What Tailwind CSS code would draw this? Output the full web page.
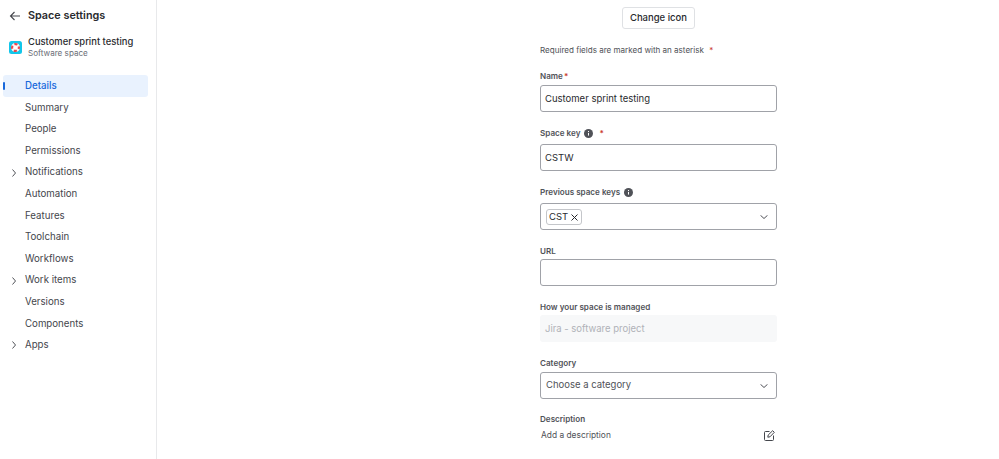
<!DOCTYPE html>
<html>
<head>
<meta charset="utf-8">
<title>Space settings</title>
<script src="https://cdn.jsdelivr.net/npm/@tailwindcss/browser@4"></script>
</head>
<body class="bg-white">
<div class="flex h-[459px] w-[999px] overflow-hidden font-['Inter',sans-serif] text-[#292a2e]">

  <!-- sidebar -->
  <aside class="w-[157px] shrink-0 border-r border-[#e8e9eb] pl-[3px] pr-2">
    <div class="flex h-[31px] items-center pl-[6px]">
      <svg class="h-[12px] w-[12px]" viewBox="0 0 12 12" fill="none" stroke="#44464c" stroke-width="1.1"><path d="M11 6H1.5M5.5 2 1.5 6l4 4"/></svg>
      <span class="ml-[7px] pt-[1px] text-[10.8px] font-semibold">Space settings</span>
    </div>
    <div class="mt-[2px] flex h-[28px] items-center pl-[6px]">
      <svg class="h-[13px] w-[13px] shrink-0" viewBox="0 0 13 13">
        <rect width="13" height="13" rx="2.5" fill="#12c6ea"/>
        <circle cx="6.5" cy="6.5" r="3.4" fill="#fff" stroke="#f6f6f6" stroke-width="2.2"/>
        <circle cx="6.5" cy="6.5" r="3.4" fill="none" stroke="#e5484d" stroke-width="2.2" stroke-dasharray="3.2 2.14" stroke-dashoffset="1.6"/>
      </svg>
      <div class="ml-[6px]">
        <div class="text-[9.4px] leading-[13px] font-medium">Customer sprint testing</div>
        <div class="text-[8.1px] leading-[11px] text-[#6b6e76]">Software space</div>
      </div>
    </div>
    <nav class="mt-[14px] text-[9.7px] text-[#44464c]">
      <a class="relative flex h-[21.6px] items-center rounded-[3px] bg-[#e9f2fe] pl-[22px] pt-[1px] font-medium text-[#1868db]"><span class="absolute left-[0px] top-[7px] h-[8px] w-[2px] rounded-sm bg-[#1868db]"></span>Details</a>
      <a class="flex h-[21.6px] items-center pl-[22px] pt-[1px]">Summary</a>
      <a class="flex h-[21.6px] items-center pl-[22px] pt-[1px]">People</a>
      <a class="flex h-[21.6px] items-center pl-[22px] pt-[1px]">Permissions</a>
      <a class="flex h-[21.6px] items-center pl-[9px] pt-[1px]"><svg class="mr-[9px] h-[8px] w-[4px]" viewBox="0 0 4 8" fill="none" stroke="#505258"><path d="M.5 .5 3.5 4 .5 7.5"/></svg>Notifications</a>
      <a class="flex h-[21.6px] items-center pl-[22px] pt-[1px]">Automation</a>
      <a class="flex h-[21.6px] items-center pl-[22px] pt-[1px]">Features</a>
      <a class="flex h-[21.6px] items-center pl-[22px] pt-[1px]">Toolchain</a>
      <a class="flex h-[21.6px] items-center pl-[22px] pt-[1px]">Workflows</a>
      <a class="flex h-[21.6px] items-center pl-[9px] pt-[1px]"><svg class="mr-[9px] h-[8px] w-[4px]" viewBox="0 0 4 8" fill="none" stroke="#505258"><path d="M.5 .5 3.5 4 .5 7.5"/></svg>Work items</a>
      <a class="flex h-[21.6px] items-center pl-[22px] pt-[1px]">Versions</a>
      <a class="flex h-[21.6px] items-center pl-[22px] pt-[1px]">Components</a>
      <a class="flex h-[21.6px] items-center pl-[9px] pt-[1px]"><svg class="mr-[9px] h-[8px] w-[4px]" viewBox="0 0 4 8" fill="none" stroke="#505258"><path d="M.5 .5 3.5 4 .5 7.5"/></svg>Apps</a>
    </nav>
  </aside>

  <!-- form -->
  <main class="ml-[383px] w-[237px] shrink-0">
    <div class="flex justify-center pt-[7px]">
      <button class="h-[22px] w-[73px] rounded-[3px] border border-[#dfe1e4] pt-[1px] text-[9.5px] font-medium">Change icon</button>
    </div>
    <p class="mt-[15px] text-[8.05px] leading-[12px] text-[#505258]">Required fields are marked with an asterisk <span class="ml-[3px] text-[#c9372c]">*</span></p>

    <label class="mt-[14px] flex h-[12px] items-center text-[8.1px] font-semibold text-[#505258]">Name<span class="ml-[1px] text-[#c9372c]">*</span></label>
    <div class="mt-[3px] flex h-[27px] items-center rounded-[3px] border border-[#a0a2a8] pl-[4px] pt-[1px] text-[9.5px]">Customer sprint testing</div>

    <label class="mt-[15px] flex h-[12px] items-center text-[8.1px] font-semibold text-[#505258]">Space key
      <svg class="ml-[4px] h-[9px] w-[9px]" viewBox="0 0 9 9"><circle cx="4.5" cy="4.5" r="4.5" fill="#505258"/><path d="M4.5 4v2.6M4.5 2v1.1" stroke="#fff"/></svg>
      <span class="ml-[6px] text-[#c9372c]">*</span></label>
    <div class="mt-[5px] flex h-[27px] items-center rounded-[3px] border border-[#a0a2a8] pl-[4px] pt-[1px] text-[9.5px]">CSTW</div>

    <label class="mt-[15px] flex h-[12px] items-center text-[8.1px] font-semibold text-[#505258]">Previous space keys
      <svg class="ml-[4px] h-[9px] w-[9px]" viewBox="0 0 9 9"><circle cx="4.5" cy="4.5" r="4.5" fill="#505258"/><path d="M4.5 4v2.6M4.5 2v1.1" stroke="#fff"/></svg></label>
    <div class="mt-[5px] flex h-[27px] items-center justify-between rounded-[3px] border border-[#a0a2a8] pl-[5px] pr-[8px]">
      <span class="flex h-[16px] w-[36px] items-center rounded-[3px] border border-[#c4c6ca] pl-[2px] pt-[1px] text-[9.5px]">CST
        <svg class="ml-[3px] h-[7px] w-[7px]" viewBox="0 0 7 7" stroke="#292a2e"><path d="M.5 .5l6 6M6.5 .5l-6 6"/></svg></span>
      <svg class="h-[4px] w-[8px]" viewBox="0 0 8 4" fill="none" stroke="#505258"><path d="M.5 .3 4 3.5 7.5 .3"/></svg>
    </div>

    <label class="mt-[15px] flex h-[12px] items-center text-[8.1px] font-semibold text-[#505258]">URL</label>
    <div class="mt-[2px] h-[27px] rounded-[3px] border border-[#a0a2a8]"></div>

    <label class="mt-[15px] flex h-[12px] items-center text-[8.1px] font-semibold text-[#505258]">How your space is managed</label>
    <div class="mt-[2px] flex h-[27px] items-center rounded-[3px] bg-[#f7f8f9] pl-[5px] pt-[2px] text-[9.5px] text-[#b0b2b8]">Jira - software project</div>

    <label class="mt-[15px] flex h-[12px] items-center text-[8.1px] font-semibold text-[#505258]">Category</label>
    <div class="mt-[3px] flex h-[27px] items-center justify-between rounded-[3px] border border-[#a0a2a8] pl-[5px] pr-[8px] text-[9.5px] text-[#505258]">Choose a category
      <svg class="h-[4px] w-[8px]" viewBox="0 0 8 4" fill="none" stroke="#505258"><path d="M.5 .3 4 3.5 7.5 .3"/></svg>
    </div>

    <label class="mt-[14px] flex h-[12px] items-center text-[8.1px] font-semibold text-[#505258]">Description</label>
    <div class="mt-[2px] flex h-[16px] items-center justify-between pl-[1px] pr-[2px] text-[8.4px] text-[#505258]">Add a description
      <svg class="h-[11px] w-[11px]" viewBox="0 0 11 11" fill="none" stroke="#44464c"><path d="M5.5 1.5H1.5a1 1 0 0 0-1 1v7a1 1 0 0 0 1 1h7a1 1 0 0 0 1-1v-4"/><path d="M3.8 7.2 4.2 5 8.7.7l1.6 1.6L6 6.8Z"/></svg>
    </div>
  </main>
</div>
</body>
</html>
